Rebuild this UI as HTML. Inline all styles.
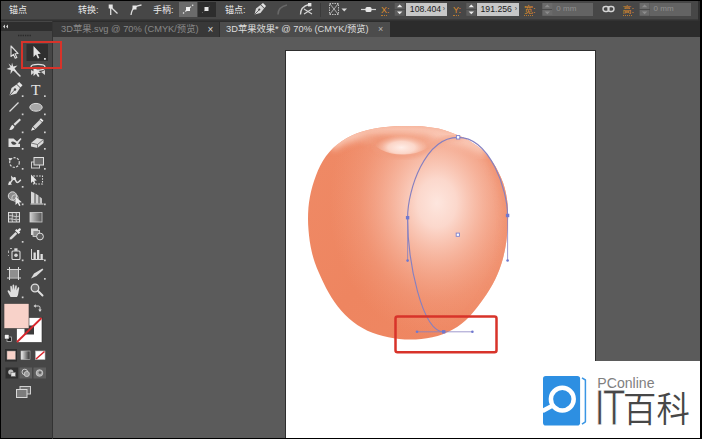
<!DOCTYPE html>
<html><head><meta charset="utf-8">
<style>
html,body{margin:0;padding:0;background:#000;}
body{width:702px;height:439px;overflow:hidden;position:relative;font-family:"Liberation Sans","Noto Sans CJK SC",sans-serif;}
.abs{position:absolute;}
#topbar{left:1px;top:1px;width:699px;height:21px;background:linear-gradient(#474747 0,#474747 17.5px,#3a3a3a 18.5px,#2e2e2e 20px,#2a2a2a 21px);}
#tabbar{left:1px;top:22px;width:699px;height:15px;background:#2c2c2c;}
#canvas{left:53px;top:37px;width:647px;height:401px;background:#5b5b5b;}
#tools{left:1px;top:21px;width:51px;height:417px;background:#464646;}
#art{left:285px;top:50px;width:309px;height:387px;background:#fff;border:1px solid #2e2e2e;border-bottom:none;}
#wm{left:590px;top:361.3px;width:110px;height:76.7px;background:#fff;}
.t{position:absolute;color:#e8e8e8;font-size:9px;line-height:12px;white-space:nowrap;top:4px;}
.o{color:#d98a2e;} .o u{text-decoration:none;border-bottom:1px dotted #b87a30;padding-bottom:0px;}
.fld{position:absolute;top:3px;height:12.6px;background:#c7c7c7;color:#1c1c1c;font-size:8.7px;line-height:12.6px;white-space:nowrap;box-sizing:border-box;padding-left:4px;}
.fld.dis{background:#636363;color:#909090;font-size:8px;}
.spin{position:absolute;top:3px;width:8px;height:12px;}
.tab{position:absolute;top:22px;height:15px;font-size:9.3px;line-height:15.5px;white-space:nowrap;box-sizing:border-box;}
</style></head><body>
<div id="topbar" class="abs"></div>
<div id="tabbar" class="abs"></div>
<div id="canvas" class="abs"></div>
<div id="tools" class="abs"></div>
<div id="art" class="abs"></div>
<div id="wm" class="abs"></div>



<!-- APPLE -->
<svg class="abs" style="left:286px;top:51px" width="310" height="388" viewBox="286 51 310 388">
 <defs>
  <path id="appleP" d="M308.0 219.0 C308.0 215.3 308.1 211.6 308.4 207.9 C308.7 204.2 309.2 200.6 309.9 197.0 C310.6 193.3 311.4 189.7 312.4 186.2 C313.4 182.7 314.6 179.1 315.9 175.7 C317.2 172.2 318.6 168.8 320.3 165.6 C322.0 162.3 323.8 159.1 325.9 156.2 C328.1 153.2 330.5 150.5 333.1 147.9 C335.8 145.4 338.7 143.2 341.7 141.2 C344.8 139.1 348.0 137.3 351.3 135.8 C354.6 134.2 358.1 132.9 361.6 131.8 C365.1 130.6 368.7 129.8 372.3 129.0 C375.9 128.3 379.5 127.7 383.2 127.3 C386.9 126.8 390.6 126.6 394.2 126.3 C397.9 126.1 401.6 126.0 405.3 126.0 C409.0 125.9 412.7 126.0 416.4 126.1 C420.1 126.3 423.8 126.5 427.5 126.9 C431.1 127.3 434.8 127.8 438.4 128.6 C441.9 129.4 445.5 130.5 448.9 131.7 C452.4 132.9 455.8 134.3 459.2 135.8 C462.5 137.3 465.9 138.9 469.1 140.7 C472.2 142.6 475.4 144.6 478.2 146.8 C481.1 149.0 483.8 151.5 486.3 154.2 C488.8 156.9 491.0 159.8 493.1 162.8 C495.2 165.9 497.0 169.1 498.6 172.4 C500.3 175.6 501.7 179.0 503.0 182.5 C504.2 186.0 505.2 189.5 505.9 193.1 C506.7 196.7 507.2 200.4 507.6 204.0 C507.9 207.7 508.0 211.4 508.1 215.1 C508.1 218.8 508.0 222.5 507.8 226.2 C507.6 229.8 507.3 233.5 506.8 237.2 C506.4 240.9 505.9 244.5 505.2 248.2 C504.5 251.8 503.7 255.4 502.8 259.0 C501.8 262.5 500.7 266.0 499.4 269.5 C498.1 272.9 496.7 276.3 495.1 279.6 C493.4 282.9 491.6 286.1 489.7 289.3 C487.8 292.5 485.7 295.5 483.6 298.6 C481.5 301.6 479.3 304.6 477.0 307.5 C474.7 310.4 472.4 313.2 469.9 315.9 C467.3 318.6 464.7 321.2 461.8 323.4 C459.0 325.7 456.0 327.8 452.8 329.6 C449.6 331.4 446.3 332.9 442.8 334.2 C439.4 335.5 435.8 336.4 432.3 337.2 C428.7 338.0 425.0 338.5 421.4 338.9 C417.7 339.3 414.0 339.5 410.3 339.5 C406.6 339.5 402.9 339.3 399.3 338.9 C395.6 338.6 392.0 338.0 388.4 337.3 C384.8 336.6 381.2 335.7 377.6 334.6 C374.1 333.5 370.7 332.2 367.4 330.7 C364.0 329.1 360.8 327.3 357.7 325.3 C354.7 323.3 351.8 321.0 349.0 318.6 C346.3 316.2 343.7 313.5 341.3 310.8 C338.9 308.0 336.6 305.1 334.5 302.1 C332.4 299.1 330.5 295.9 328.7 292.7 C326.8 289.5 325.2 286.2 323.6 282.9 C321.9 279.5 320.3 276.2 318.9 272.8 C317.4 269.4 316.0 266.0 314.8 262.5 C313.6 259.0 312.6 255.5 311.8 251.9 C310.9 248.3 310.3 244.7 309.7 241.0 C309.2 237.4 308.8 233.7 308.5 230.0 C308.2 226.3 308.0 222.6 308.0 219.0 Z"/>
  <clipPath id="appleC"><use href="#appleP"/></clipPath>
  <linearGradient id="aBase" x1="308" y1="140" x2="508" y2="330" gradientUnits="userSpaceOnUse">
   <stop offset="0" stop-color="#ef8a66"/><stop offset="0.5" stop-color="#ee8560"/><stop offset="1" stop-color="#ef8863"/>
  </linearGradient>
  <radialGradient id="aHi" cx="0.5" cy="0.5" r="0.5">
   <stop offset="0" stop-color="#fee9e2" stop-opacity="0.97"/>
   <stop offset="0.18" stop-color="#fde1d8" stop-opacity="0.9"/>
   <stop offset="0.42" stop-color="#fbd0c1" stop-opacity="0.6"/>
   <stop offset="0.72" stop-color="#f7b9a3" stop-opacity="0.25"/>
   <stop offset="1" stop-color="#f4a88d" stop-opacity="0"/>
  </radialGradient>
  <radialGradient id="dHi" cx="403" cy="151" r="34" gradientUnits="userSpaceOnUse" gradientTransform="translate(0 90.6) scale(1 0.4)">
   <stop offset="0" stop-color="#fee9e1"/><stop offset="0.35" stop-color="#fbd2c3"/><stop offset="0.75" stop-color="#f5ae96"/><stop offset="1" stop-color="#f19c7e"/>
  </radialGradient>
  <linearGradient id="dFade" x1="0" y1="129" x2="0" y2="154" gradientUnits="userSpaceOnUse">
   <stop offset="0" stop-color="#fff" stop-opacity="0"/><stop offset="0.35" stop-color="#fff" stop-opacity="0.45"/><stop offset="0.7" stop-color="#fff" stop-opacity="1"/>
  </linearGradient>
  <mask id="dMask" maskUnits="userSpaceOnUse" x="360" y="120" width="90" height="40"><rect x="360" y="120" width="90" height="40" fill="url(#dFade)"/></mask>
  <clipPath id="dimC"><path d="M368 120 L368 139 C372 143.5 376 147 381 149.8 C388 153.6 395 154.6 402 154.6 C409 154.6 417 153.6 424 149.8 C429 147 433 143.5 437 139 L437 120 Z"/></clipPath>
  <radialGradient id="dHi2" cx="0.5" cy="0.5" r="0.5">
   <stop offset="0" stop-color="#ffeee8" stop-opacity="1"/><stop offset="0.5" stop-color="#fddfd4" stop-opacity="0.85"/><stop offset="1" stop-color="#f8c2ae" stop-opacity="0"/>
  </radialGradient>
  <filter id="bl2" x="-30%" y="-30%" width="160%" height="160%"><feGaussianBlur stdDeviation="2"/></filter>
  <filter id="bl3" x="-30%" y="-30%" width="160%" height="160%"><feGaussianBlur stdDeviation="3.5"/></filter>
  <filter id="bl6" x="-30%" y="-30%" width="160%" height="160%"><feGaussianBlur stdDeviation="6"/></filter>
 </defs>
 <use href="#appleP" fill="url(#aBase)"/>
 <g clip-path="url(#appleC)">
  <!-- top rim lighter band -->
  <path d="M330 146 C352 126 440 121 488 152" fill="none" stroke="#facbb8" stroke-width="12" filter="url(#bl3)" opacity="0.95"/>
  <!-- main highlight -->
  <ellipse cx="437" cy="203" rx="108" ry="135" fill="url(#aHi)"/>
  <!-- right edge shade -->
  <path d="M486 150 C506 180 513 215 505 258 C499 285 485 308 460 332" fill="none" stroke="#f0906d" stroke-width="8" filter="url(#bl3)" opacity="0.7"/>
  <!-- dimple -->
  <ellipse cx="397" cy="139.5" rx="36" ry="5.5" fill="#f1a082" filter="url(#bl3)" opacity="0.85"/>
  <ellipse cx="384" cy="141" rx="12" ry="4" fill="#ef9474" filter="url(#bl2)" opacity="0.7"/>
  <path d="M374 146.5 C382 154 392 156.3 402 156.3 C412 156.3 423 154 431 146.5" fill="none" stroke="#f09b7d" stroke-width="3.2" filter="url(#bl2)" opacity="0.95"/>
  <g clip-path="url(#dimC)">
   <ellipse cx="401.5" cy="147.5" rx="27" ry="12" fill="url(#dHi2)"/>
  </g>
  <!-- shoulder ridge right of dimple -->
  <path d="M430 146 C440 140 450 137 462 138" fill="none" stroke="#f3a488" stroke-width="5" filter="url(#bl2)" opacity="0.75"/>
 </g>
 <!-- blue path -->
 <g fill="none" stroke="#8680c0" stroke-width="1.15">
  <path d="M443.7 331.8 C422 331.8 407.6 262 407.6 217.7 C407.6 190 425 137.3 458 137.3 C490 137.3 507.6 190 507.6 215.5"/>
  <path d="M417 331.8 H472.4 M407.6 217.7 V260.6 M507.6 215.5 V260.5" stroke-width="0.8"/>
 </g>
 <g fill="#6f78cf">
  <circle cx="417" cy="331.8" r="1.3"/><circle cx="472.4" cy="331.8" r="1.3"/>
  <circle cx="407.6" cy="260.6" r="1.3"/><circle cx="507.6" cy="260.5" r="1.3"/>
  <rect x="405.9" y="216" width="3.4" height="3.4"/><rect x="505.9" y="213.8" width="3.4" height="3.4"/>
  <rect x="442" y="330.1" width="3.4" height="3.4"/>
 </g>
 <rect x="456.4" y="135.6" width="3.4" height="3.4" fill="#fff" stroke="#7a80cf" stroke-width="0.9"/>
 <rect x="456.2" y="233.1" width="3.2" height="3.2" fill="#fff" stroke="#7a80cf" stroke-width="0.9"/>
 <!-- red box -->
 <rect x="395.5" y="316.4" width="101" height="35.8" rx="2" fill="none" stroke="#d8332a" stroke-width="2.5"/>
</svg>

<!-- WATERMARK -->
<svg class="abs" style="left:536px;top:362px" width="165" height="77" viewBox="536 362 165 77">
 <rect x="543" y="376" width="37.1" height="49.5" rx="2.8" fill="#2d8fe2"/>
 <path d="M582 377.8 L585.4 380 V421.8 L582 424.2" fill="none" stroke="#3a96e4" stroke-width="1.5" stroke-linejoin="round"/>
 <path d="M552.5 405.6 L542.5 411" stroke="#ffffff" stroke-width="4.4"/>
 <circle cx="562.3" cy="399.1" r="11.4" fill="#2d8fe2" stroke="#ffffff" stroke-width="4.5"/>
 <text id="wm1" x="597.3" y="388.3" font-family="Liberation Sans, sans-serif" font-size="14.1" fill="#808080">PConline</text>
 <g transform="translate(594.6 424.6) scale(0.755 1)"><text id="wm2" x="0" y="0" font-family="Liberation Sans, sans-serif" font-size="49.3" letter-spacing="-3" fill="#474747" stroke="#ffffff" stroke-width="0.9">IT</text></g>
 <g transform="translate(623.1 422.4) scale(0.95 1)"><text id="wm3" x="0" y="0" font-family="'Liberation Sans','Noto Sans CJK SC', sans-serif" font-weight="350" font-size="35.1" fill="#474747">百科</text></g>
</svg>

<!-- TOOLBAR -->
<svg class="abs" style="left:0;top:21px" width="53" height="418" viewBox="0 21 53 418">
 <defs>
  <linearGradient id="gr1" x1="0" x2="1" y1="0" y2="0"><stop offset="0" stop-color="#f4f4f4"/><stop offset="1" stop-color="#2a2a2a"/></linearGradient>
  <linearGradient id="gr2" x1="0" x2="1" y1="0" y2="0"><stop offset="0" stop-color="#cfcfcf"/><stop offset="1" stop-color="#555"/></linearGradient>
 </defs>
 <!-- header -->
 <rect x="1" y="22" width="51" height="9" fill="#2e2e2e"/>
 <path d="M5 24.5 L3 26.5 L5 28.5 Z M8 24.5 L6 26.5 L8 28.5 Z" fill="#d8d8d8"/>
 <path d="M18 35.5 H31" stroke="#2a2a2a" stroke-width="1.6" stroke-dasharray="1.4 0.9"/>
 <path d="M52.5 21 V439" stroke="#333" stroke-width="1"/>
 <!-- selected tool bg -->
 <rect x="26.5" y="44" width="21.5" height="17" fill="#2f2f2f"/>
 <!-- selection tool (left, outline-ish) -->
 <path d="M11 46 L11 56.5 L13.4 54.3 L15.2 58.3 L16.8 57.6 L15 53.7 L18 53.5 Z" fill="#3a3a3a" stroke="#dedede" stroke-width="1.1" stroke-linejoin="round"/>
 <!-- direct selection (right, filled) -->
 <path d="M33.5 46 L33.5 57 L36 54.6 L37.8 58.6 L39.4 57.9 L37.6 54 L40.8 53.8 Z" fill="#e4e4e4"/>
 <rect x="44" y="58" width="1.8" height="1.8" fill="#ddd"/>
 <!-- magic wand -->
 <g stroke="#dcdcdc" stroke-width="1.5" stroke-linecap="round">
  <path d="M13 69 L20 76"/>
 </g>
 <path d="M12 62.5 L13.2 66.5 L17.5 65.5 L14.5 68.5 L17 72 L13 70.5 L10.5 74 L10.8 70 L6.5 69 L10.5 67.3 L8.5 63.5 L11.5 66 Z" fill="#e2e2e2"/>
 <!-- lasso -->
 <path d="M31 67 C31 63.5 45 63.5 45 67 C45 70 38 71 35 69.5" fill="none" stroke="#e0e0e0" stroke-width="1.3"/>
 <path d="M33.5 67.5 L33.5 76 L36 73.8 L38 77 L39.5 76.2 L37.7 73 L41 72.8 Z" fill="#e4e4e4"/>
 <path d="M31 70 L35 72 L31 75 Z M45 70 L41 72 L45 75 Z" fill="#d2d2d2"/>
 <!-- pen -->
 <g transform="translate(9,82)">
  <path d="M0.5 13.5 L2.5 6 L7.5 2.5 L11 6 L7.5 11.5 Z" fill="#dedede"/>
  <path d="M8 2 L10.2 0 L13.5 3.3 L11.5 5.5 Z" fill="#e8e8e8"/>
  <circle cx="6" cy="7.5" r="1.2" fill="#464646"/>
  <path d="M0.5 13.5 L5.5 8" stroke="#464646" stroke-width="0.9"/>
 </g>
 <!-- T -->
 <text x="31" y="95" font-family="Liberation Serif,serif" font-size="15.5" fill="#e4e4e4">T</text>
 <!-- dots row3 -->
 <g fill="#d0d0d0">
  <rect x="21.8" y="95.3" width="1.7" height="1.7"/><rect x="44" y="95.3" width="1.7" height="1.7"/>
  <rect x="21.8" y="113.5" width="1.7" height="1.7"/><rect x="44" y="113.5" width="1.7" height="1.7"/>
  <rect x="21.8" y="131.5" width="1.7" height="1.7"/><rect x="44" y="131.5" width="1.7" height="1.7"/>
  <rect x="21.8" y="148" width="1.7" height="1.7"/><rect x="44" y="148" width="1.7" height="1.7"/>
  <rect x="21.8" y="168" width="1.7" height="1.7"/><rect x="44" y="168" width="1.7" height="1.7"/>
  <rect x="21.8" y="186" width="1.7" height="1.7"/>
  <rect x="21.8" y="203.5" width="1.7" height="1.7"/><rect x="44" y="203.5" width="1.7" height="1.7"/>
  <rect x="21.8" y="241" width="1.7" height="1.7"/>
  <rect x="21.8" y="259.5" width="1.7" height="1.7"/><rect x="44" y="259.5" width="1.7" height="1.7"/>
  <rect x="44" y="278" width="1.7" height="1.7"/>
  <rect x="21.8" y="296.5" width="1.7" height="1.7"/>
 </g>
 <!-- line -->
 <path d="M9.5 111.5 L18.5 102.5" stroke="#dcdcdc" stroke-width="1.3"/>
 <!-- ellipse -->
 <ellipse cx="36" cy="107.3" rx="6.2" ry="3.9" fill="#a8a8a8" stroke="#dadada" stroke-width="1"/>
 <!-- brush -->
 <path d="M13.5 124 L19.5 118.5 L21 120 L15 125.8 Z" fill="#dcdcdc"/>
 <path d="M9 129.5 C10.5 129 10.5 126 12.5 124.8 L14.5 126.8 C13.5 129.5 11 130.5 9 129.5 Z" fill="#e4e4e4"/>
 <!-- pencil -->
 <path d="M33 126.5 L39.5 120 L42 122.5 L35.5 129 Z" fill="#d4d4d4"/>
 <path d="M32.5 127 L35 129.5 L31 130.8 Z" fill="#ededed"/>
 <path d="M39.5 119.5 L41 118.2 L43.5 120.7 L42.2 122 Z" fill="#f0f0f0"/>
 <!-- blob brush -->
 <path d="M8.5 138.5 H13.5 L17 141.5 L20.5 138 L21.5 139 L18 143.5 L20 144 V147 H8.5 Z" fill="#dedede"/>
 <path d="M11 142 C13 140.5 15.5 142 16.5 143.5 C15 145.5 12 145.5 11 142 Z" fill="#464646"/>
 <!-- eraser -->
 <path d="M31 143 L37 138 L43.5 139.5 L43.5 143 L37.5 148 L31 146.5 Z" fill="#dadada"/>
 <path d="M31 143 L37.5 144.5 L43.5 139.5 M37.5 144.5 V148" stroke="#5a5a5a" stroke-width="0.8" fill="none"/>
 <!-- rotate -->
 <circle cx="14.5" cy="162.5" r="4.8" fill="none" stroke="#d6d6d6" stroke-width="1.2" stroke-dasharray="2.2 1.3"/>
 <path d="M8.5 158 L12 158.3 L9.8 161.3 Z" fill="#e6e6e6"/>
 <!-- scale -->
 <rect x="31.5" y="162" width="8" height="6" fill="none" stroke="#cfcfcf" stroke-width="1"/>
 <rect x="34" y="157.5" width="9.5" height="7.5" fill="#6a6a6a" stroke="#e0e0e0" stroke-width="1"/>
 <!-- width tool -->
 <path d="M8.5 184.5 C11 183.5 11.5 179 14 179 C16 179 15.5 182.5 17.5 182.5 C19 182.5 19.5 180.5 21 180" fill="none" stroke="#dedede" stroke-width="1.6"/>
 <path d="M11 175.5 L14 178.5 L12 179 L11.5 181 Z M9 181 L12 184.5 L8.5 185 Z" fill="#e2e2e2"/>
 <circle cx="14.5" cy="178.5" r="1.4" fill="#e8e8e8"/>
 <!-- free transform -->
 <rect x="33.5" y="176" width="9" height="8" fill="none" stroke="#dcdcdc" stroke-width="1.1" stroke-dasharray="1.6 1.2"/>
 <path d="M31 174.5 L31 183 L33 181.2 L34.3 184 L35.6 183.4 L34.3 180.7 L36.8 180.5 Z" fill="#e6e6e6"/>
 <!-- shape builder -->
 <circle cx="12.5" cy="196" r="4.2" fill="#8c8c8c" stroke="#d8d8d8" stroke-width="1"/>
 <circle cx="15" cy="198" r="3.2" fill="none" stroke="#d0d0d0" stroke-width="0.9"/>
 <path d="M15.5 196.5 L15.5 205 L17.7 203 L19.2 206 L20.5 205.4 L19.1 202.4 L21.8 202.2 Z" fill="#e8e8e8"/>
 <!-- perspective grid -->
 <path d="M31 191.5 L34.5 193 V203.5 L31 203.5 Z" fill="#d8d8d8"/>
 <path d="M35.5 193.5 L38.5 195.5 V203.5 H35.5 Z" fill="#cfcfcf"/>
 <path d="M39.5 196.5 L42 198.5 V203.5 H39.5 Z" fill="#c4c4c4"/>
 <path d="M30.5 204 H43.5" stroke="#dedede" stroke-width="1"/>
 <!-- mesh -->
 <rect x="8.5" y="212.5" width="11" height="9.5" fill="#595959" stroke="#dcdcdc" stroke-width="1"/>
 <path d="M8.5 216 C12 214.5 15 218 19.5 216 M8.5 219 C12 218 15 221 19.5 219.3 M12 212.5 C13.5 216 11 218.5 12.5 222 M16 212.5 C17.5 216 15 218.5 16.5 222" fill="none" stroke="#dcdcdc" stroke-width="0.8"/>
 <!-- gradient -->
 <rect x="30" y="212.5" width="12" height="9.5" fill="url(#gr2)" stroke="#cfcfcf" stroke-width="0.8"/>
 <!-- eyedropper -->
 <path d="M9.5 239.5 L10 237.5 L15.5 232 L17.3 233.8 L11.7 239.3 Z" fill="#d8d8d8"/>
 <path d="M15 230.5 L16.5 229 L17.5 230 L19 228.5 C20 227.6 21.6 229.2 20.6 230.2 L19.2 231.6 L20.2 232.6 L18.7 234.1 Z" fill="#eaeaea"/>
 <!-- blend -->
 <rect x="31" y="228.5" width="7" height="6.5" fill="#d8d8d8"/>
 <rect x="33" y="230.5" width="6.5" height="6" fill="#8a8a8a" stroke="#dcdcdc" stroke-width="0.8"/>
 <circle cx="40" cy="236.5" r="3.4" fill="#5a5a5a" stroke="#e0e0e0" stroke-width="1"/>
 <!-- symbol sprayer -->
 <rect x="12" y="251" width="8" height="8.5" rx="1" fill="none" stroke="#dadada" stroke-width="1.1"/>
 <rect x="14.3" y="248.3" width="3.2" height="2.5" fill="#dedede"/>
 <circle cx="16" cy="255.3" r="1.8" fill="#d8d8d8"/>
 <path d="M8.5 250.5 V253 M10 248.5 H12 M8.5 255 V256" stroke="#bdbdbd" stroke-width="0.9"/>
 <!-- graph -->
 <path d="M31.5 249 V259.5 H43.5" stroke="#d8d8d8" stroke-width="1" fill="none"/>
 <rect x="33.5" y="252.5" width="2.3" height="6.5" fill="#e0e0e0"/><rect x="37" y="250" width="2.3" height="9" fill="#e0e0e0"/><rect x="40.5" y="254" width="2.3" height="5" fill="#e0e0e0"/>
 <!-- artboard -->
 <rect x="10" y="270" width="8" height="7.5" fill="#8f8f8f"/>
 <path d="M9.5 267 V280 M18.5 267 V280 M7 269.5 H21 M7 278 H21" stroke="#d8d8d8" stroke-width="1" fill="none"/>
 <!-- slice -->
 <path d="M31 278.5 L34 273.5 L42.5 268.5 L43.3 269.8 L36.5 276 Z" fill="#dadada"/>
 <!-- hand -->
 <path d="M10.5 297 C9.5 294.5 8 292.5 7.5 291 C7.8 290 9 290.2 9.8 291.2 L10.6 292.2 L10.3 286.5 C10.3 285.6 11.6 285.6 11.8 286.5 L12.4 290 L12.6 285.3 C12.7 284.3 14.1 284.3 14.2 285.3 L14.5 290 L15.3 285.8 C15.5 284.9 16.8 285.1 16.8 286 L16.6 290.6 L17.8 287.6 C18.2 286.8 19.3 287.2 19.2 288 L18.3 293.5 C18 295.5 17.5 296 17 297 Z" fill="#dedede"/>
 <!-- zoom -->
 <circle cx="35" cy="288" r="3.8" fill="#6f6f6f" stroke="#dedede" stroke-width="1.3"/>
 <path d="M38 291 L42.5 295.5" stroke="#dedede" stroke-width="2" stroke-linecap="round"/>
 <!-- fill / stroke -->
 <rect x="16.5" y="317.5" width="25.5" height="25" fill="#ffffff" stroke="#2a2a2a" stroke-width="0.6"/>
 <rect x="24.5" y="325.5" width="9.5" height="9" fill="#3c3c3c"/>
 <path d="M17 342 L41.5 318" stroke="#d8262c" stroke-width="1.8"/>
 <rect x="4" y="303.5" width="25" height="25" fill="#f8d2c9" stroke="#3a3a3a" stroke-width="0.6"/>
 <!-- swap -->
 <path d="M35 306 H38.5 Q40 306 40 307.5 V310.5" fill="none" stroke="#d6d6d6" stroke-width="1"/>
 <path d="M35.8 304.2 L33.5 306 L35.8 307.8 Z M38.3 309.6 L40 312 L41.7 309.6 Z" fill="#d6d6d6"/>
 <!-- default -->
 <rect x="7" y="337" width="4.5" height="4.5" fill="#1e1e1e" stroke="#cfcfcf" stroke-width="0.7"/>
 <rect x="4.5" y="334.5" width="4.5" height="4.5" fill="#f4f4f4" stroke="#2a2a2a" stroke-width="0.5"/>
 <!-- color mode buttons -->
 <rect x="5" y="349" width="12" height="12.5" fill="#2d2d2d"/>
 <rect x="7" y="351" width="8.5" height="8.5" fill="#f8d2c9" stroke="#8a8a8a" stroke-width="0.5"/>
 <rect x="21" y="351" width="9" height="8.5" fill="url(#gr1)" stroke="#bdbdbd" stroke-width="0.6"/>
 <rect x="35.5" y="351" width="9.5" height="8.5" fill="#fff" stroke="#bdbdbd" stroke-width="0.6"/>
 <path d="M36 359 L44.5 351.5" stroke="#d8262c" stroke-width="1.5"/>
 <!-- draw mode -->
 <rect x="5.5" y="367.5" width="12.5" height="11" fill="#2f2f2f"/>
 <rect x="19.5" y="367.5" width="12.5" height="11" fill="#5e5e5e"/>
 <rect x="33.5" y="367.5" width="12.5" height="11" fill="#5e5e5e"/>
 <circle cx="10.8" cy="372" r="2.6" fill="#bdbdbd"/><rect x="11" y="372.3" width="4.6" height="4.2" fill="#e2e2e2" stroke="#555" stroke-width="0.5"/>
 <circle cx="24.8" cy="372" r="2.8" fill="none" stroke="#c8c8c8" stroke-width="1"/><circle cx="26.8" cy="374" r="2.6" fill="#9a9a9a" stroke="#d4d4d4" stroke-width="0.8"/>
 <circle cx="39.5" cy="373" r="3.3" fill="#a9a9a9" stroke="#d0d0d0" stroke-width="0.8"/><circle cx="40" cy="372.6" r="1.4" fill="#5e5e5e"/>
 <!-- screen mode -->
 <rect x="20" y="386.5" width="10.5" height="7.5" fill="#6e6e6e" stroke="#d0d0d0" stroke-width="1"/>
 <rect x="16.5" y="389.5" width="10.5" height="8" fill="#7c7c7c" stroke="#d8d8d8" stroke-width="1"/>
</svg>
<!-- red highlight on tool -->
<div class="abs" style="left:21px;top:40.5px;width:36.5px;height:24px;border:2.2px solid #d8332a;"></div>

<div class="abs" style="left:697.5px;top:1px;width:2.5px;height:20px;background:#303030;"></div>
<!-- TOPBAR CONTENT -->
<div id="tb" class="abs" style="left:0;top:0;width:702px;height:21px;">
 <span class="t" id="t1" style="left:9px;">锚点</span>
 <span class="t" id="t2" style="left:78px;">转换:</span>
 <span class="t" id="t3" style="left:153px;">手柄:</span>
 <span class="t" id="t4" style="left:225px;">锚点:</span>
 <span class="t o" id="tx" style="left:381px;"><u>X</u>:</span>
 <span class="t o" id="ty" style="left:453px;"><u>Y</u>:</span>
 <span class="t o" id="tw" style="left:524px;"><u>宽</u>:</span>
 <span class="t o" id="th" style="left:622.5px;"><u>高</u>:</span>
 <div class="fld" style="left:405.8px;width:40.8px;">108.404<span style="position:absolute;right:1.5px;top:0;font-size:7px;color:#444">›</span></div>
 <div class="fld" style="left:476.5px;width:42.2px;">191.256<span style="position:absolute;right:1.5px;top:0;font-size:7px;color:#444">›</span></div>
 <div class="fld dis" style="left:552.3px;width:40.6px;">0 mm</div>
 <div class="fld dis" style="left:649.6px;width:41.4px;">0 mm</div>
</div>


<!-- TOPBAR ICONS -->
<svg class="abs" style="left:0;top:0" width="702" height="21" viewBox="0 0 702 21">
 <!-- convert corner -->
 <g stroke="#dcdcdc" stroke-width="1.3" fill="none">
  <path d="M110.7 5 V15"/><path d="M110.7 7 L117.5 13.5"/>
 </g>
 <rect x="108.7" y="4.5" width="4" height="4" fill="#e6e6e6"/>
 <!-- convert smooth -->
 <path d="M131 15 C131.5 11 132.5 9 134.5 7.5 C136.5 6 139 5.3 141.5 5" stroke="#dcdcdc" stroke-width="1.3" fill="none"/>
 <rect x="132.5" y="5.5" width="4" height="4" fill="#e6e6e6"/>
 <!-- handle buttons -->
 <rect x="179" y="2" width="18" height="15" fill="#6b6b6b"/>
 <rect x="198" y="2" width="18" height="15" fill="#2d2d2d"/>
 <path d="M183 13.5 L193.5 4.5" stroke="#e0e0e0" stroke-width="1.2" stroke-dasharray="1.5 1.5"/>
 <rect x="186" y="7" width="4" height="4" fill="#f2f2f2"/>
 <path d="M202 13 L211 5" stroke="#777" stroke-width="1" stroke-dasharray="1 2"/>
 <rect x="204.5" y="7" width="4" height="4" fill="#e8e8e8"/>
 <!-- pen remove anchor -->
 <g transform="translate(254,3)">
  <path d="M0.5 11.5 L2 5.5 L6.5 2 L10 5.5 L6.5 10 Z" fill="#d8d8d8"/>
  <path d="M7 1.5 L9 0 L12 3 L10.5 5 Z" fill="#e4e4e4"/>
  <circle cx="5.3" cy="6.5" r="1.1" fill="#474747"/>
  <path d="M0.5 11.5 L5 7" stroke="#474747" stroke-width="0.8"/>
 </g>
 <!-- dim curve -->
 <path d="M278 14.5 C278 10 280 6.5 287 5" stroke="#686868" stroke-width="1.6" fill="none"/>
 <!-- cut path -->
 <g stroke="#d6d6d6" stroke-width="1.3" fill="none">
  <path d="M300.5 14.5 C300.5 9 303 6 309 4.5"/>
  <path d="M304 9 L312 14 M304 14 L312 9" stroke-width="1.1"/>
 </g>
 <rect x="308" y="3" width="3.4" height="3.4" fill="#e6e6e6"/>
 <!-- separator -->
 <path d="M320.5 3 V17" stroke="#3a3a3a"/>
 <!-- box icon -->
 <g stroke="#c8c8c8" stroke-width="0.9" fill="none">
  <rect x="329.5" y="3.5" width="9" height="11" stroke-dasharray="1.5 1"/>
  <path d="M330 4 L338 14 M338 4 L330 14" stroke-width="0.8"/>
 </g>
 <path d="M341.5 8.5 H347 L344.25 11.5 Z" fill="#d8d8d8"/>
 <!-- align icon -->
 <path d="M361 9.5 H376" stroke="#d0d0d0" stroke-width="1.2"/>
 <rect x="365.5" y="7" width="6" height="5" rx="1.5" fill="#e6e6e6"/>
 <!-- spinners -->
 <defs><g id="sp">
  <rect x="0" y="3" width="10" height="6" fill="#5c5c5c"/><rect x="0" y="9.8" width="10" height="6" fill="#5c5c5c"/>
  <path d="M2.3 7.3 L5 4.5 L7.7 7.3 Z M2.3 11.5 L5 14.3 L7.7 11.5 Z" fill="#ececec"/>
 </g>
 <g id="spd">
  <rect x="0" y="3" width="10" height="6" fill="#6a6a6a"/><rect x="0" y="9.8" width="10" height="6" fill="#6a6a6a"/>
  <path d="M2.3 7.3 L5 4.5 L7.7 7.3 Z M2.3 11.5 L5 14.3 L7.7 11.5 Z" fill="#8c8c8c"/>
 </g></defs>
 <use href="#sp" x="394.7"/><use href="#sp" x="466.3"/><use href="#spd" x="542.3"/><use href="#spd" x="639.6"/>
 <!-- chain -->
 <g stroke="#d4d4d4" stroke-width="1.4" fill="none">
  <rect x="603" y="6.5" width="6" height="5" rx="2.4"/>
  <rect x="608" y="6.5" width="6" height="5" rx="2.4"/>
 </g>
</svg>

<!-- TABS -->
<div class="tab" id="tab1" style="left:53px;width:166px;background:#383838;color:#888888;padding-left:8px;"><span id="tt1">3D苹果.svg @ 70% (CMYK/预览)</span><span style="position:absolute;left:154.5px;top:-0.5px;color:#d8d8d8;font-size:10px;">×</span></div>
<div class="tab" id="tab2" style="left:220px;width:170px;background:#4c4c4c;color:#dcdcdc;padding-left:6px;"><span id="tt2">3D苹果效果* @ 70% (CMYK/预览)</span><span style="position:absolute;left:158px;top:-0.5px;color:#b8b8b8;font-size:9px;">×</span></div>

</body></html>
